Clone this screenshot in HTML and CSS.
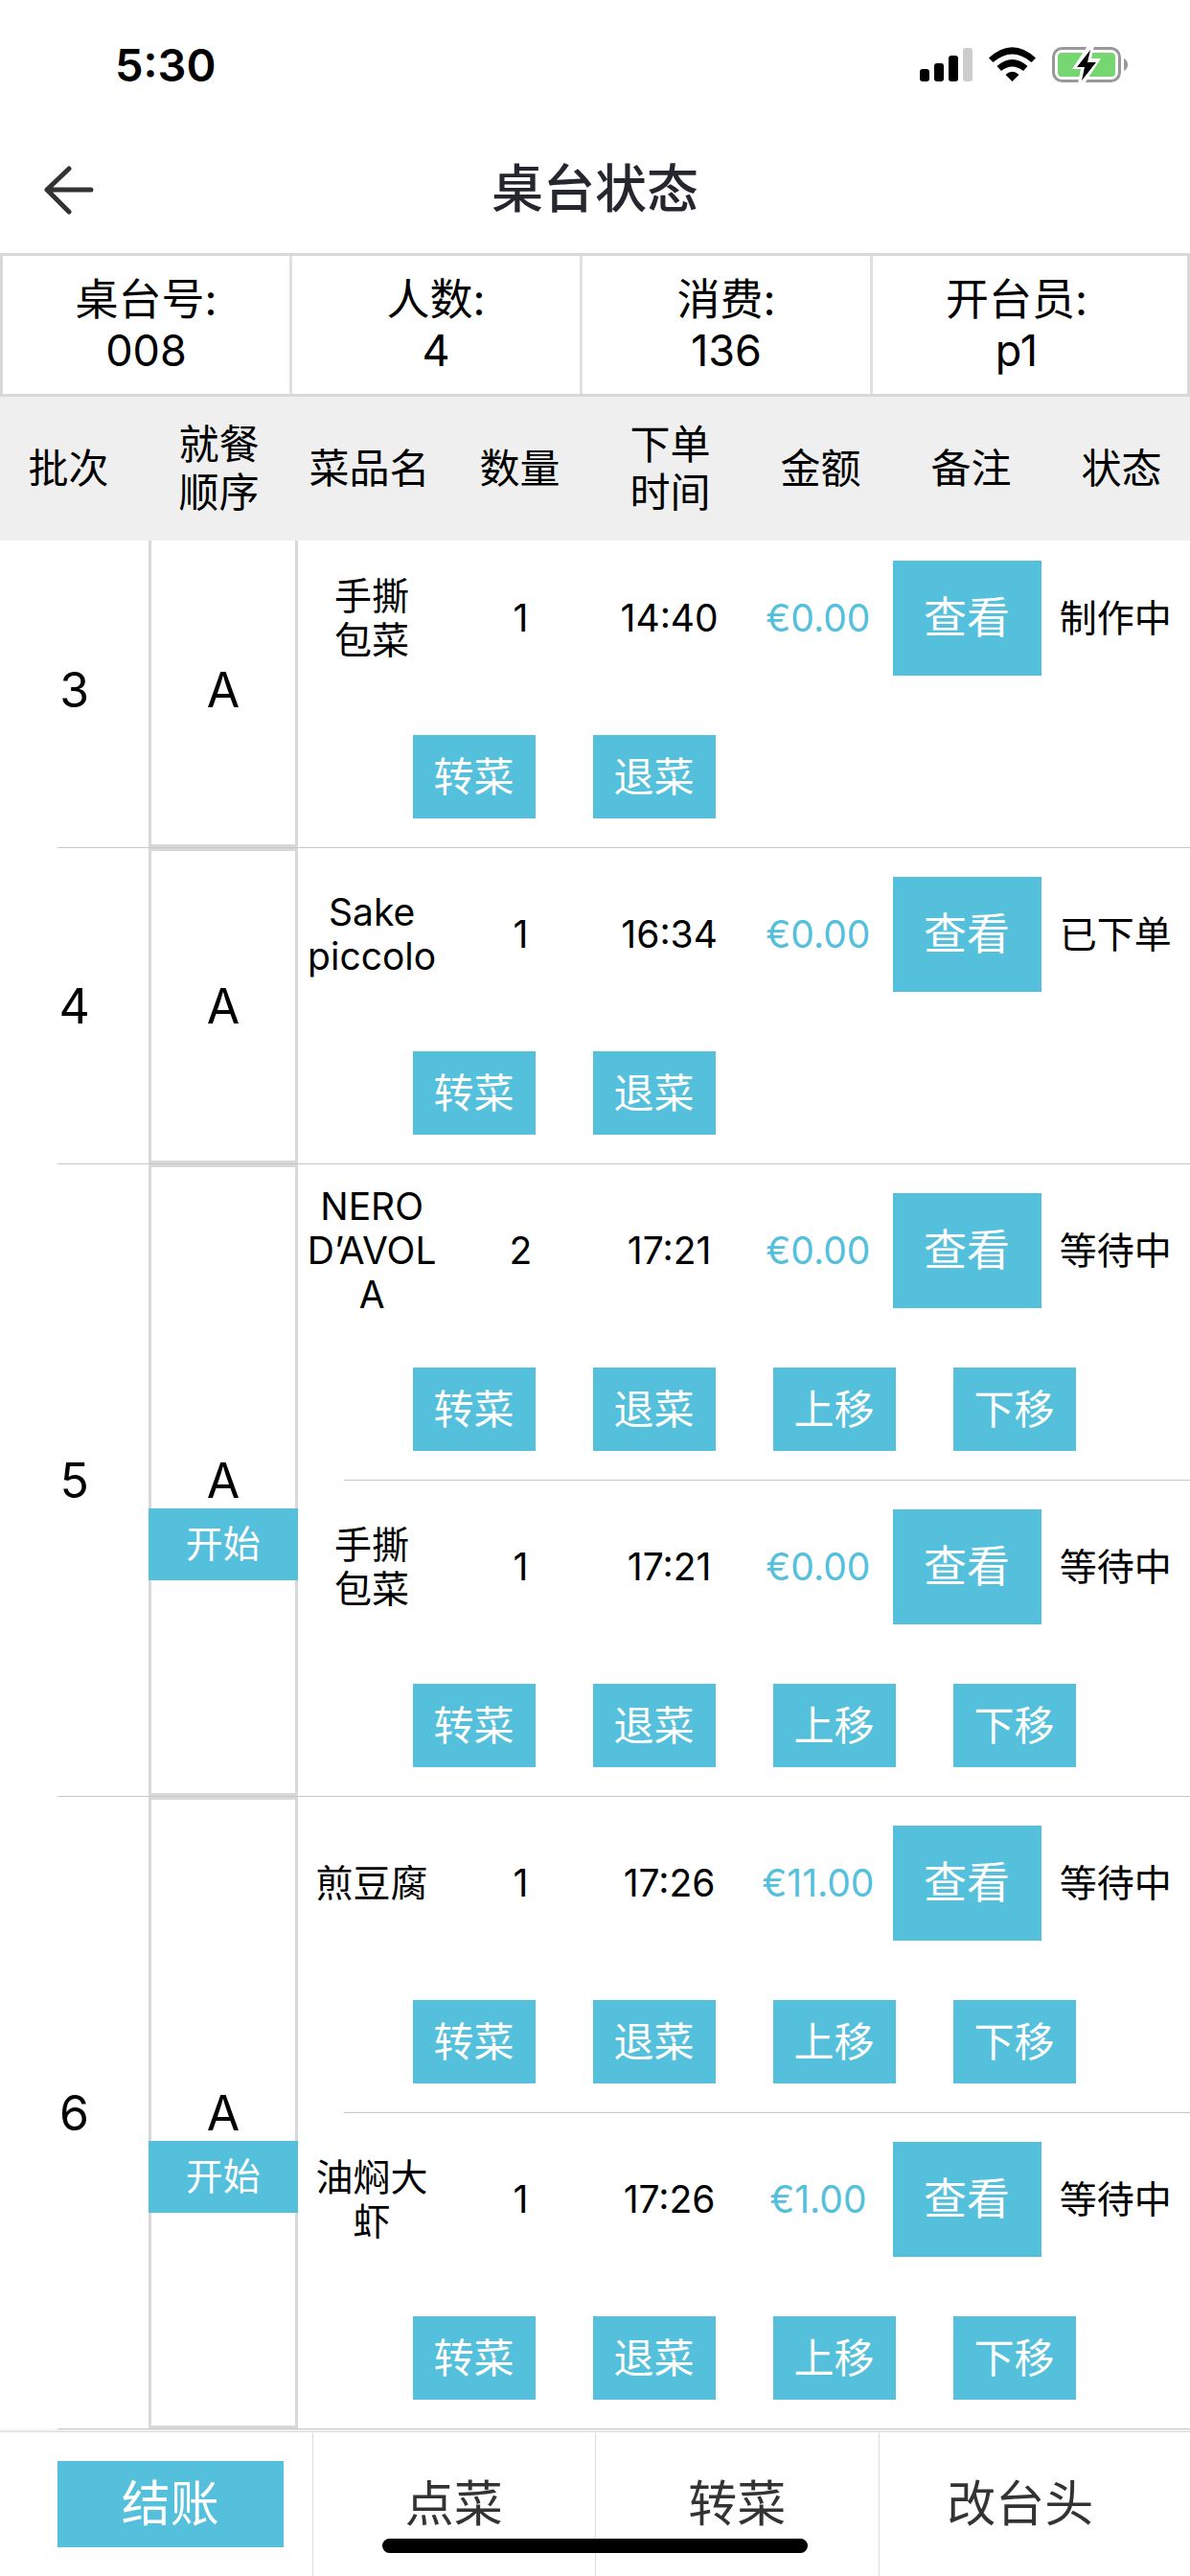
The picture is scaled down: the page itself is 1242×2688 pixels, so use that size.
FILE: index.html
```
<!DOCTYPE html>
<html lang="zh-CN">
<head>
<meta charset="utf-8">
<meta name="viewport" content="width=device-width">
<title>桌台状态</title>
<link rel="stylesheet" href="styles.css">
</head>
<body>
<div class="status-bar">
  <span class="clock">5:30</span>
  <svg class="status-icons" width="220" height="40" viewBox="958 48 220 40" aria-hidden="true">
    <rect x="960" y="72" width="10" height="13" rx="3"/>
    <rect x="975" y="66" width="10" height="19" rx="3"/>
    <rect x="990" y="58" width="10" height="27" rx="3"/>
    <rect x="1005" y="50" width="10" height="35" rx="3" fill="#ccc"/>
    <path d="M1032 60.500 Q1056.500 38 1081 60.500 L1076.500 65 Q1056.500 48 1036.500 65 Z"/>
    <path d="M1040.500 69 Q1056.500 55 1072.500 69 L1068 74 Q1056.500 65 1045 74 Z"/>
    <path d="M1049.500 78 Q1056.500 71.500 1063.500 78 L1056.500 85 Z"/>
    <rect x="1099.500" y="50.500" width="69" height="34" rx="9" fill="none" stroke="#999" stroke-width="3"/>
    <path d="M1173 61 Q1177 63 1177 67.500 Q1177 72 1173 74 Z" fill="#999"/>
    <rect x="1104" y="55" width="60" height="25" rx="4" fill="#76d672"/>
    <path d="M1135 48 L1119 72 H1128 L1125 87 H1132 L1149 61 H1139 L1142 48 Z" fill="#fff"/>
    <path d="M1138 52 L1124 70 H1132 L1129 84 L1144 65 H1135 Z"/>
  </svg>
</div>
<header class="nav-bar">
  <button class="back" type="button" aria-label="返回">
    <svg width="54" height="52" viewBox="0 0 54 52" fill="none" stroke="#333" stroke-width="5" stroke-linecap="round" stroke-linejoin="round" aria-hidden="true">
      <path d="M27 4 L4 26 L27 49 M4 26 H50"/>
    </svg>
  </button>
  <h1 class="title">桌台状态</h1>
</header>
<dl class="summary">
  <div class="summary-item"><dt>桌台号:</dt><dd>008</dd></div>
  <div class="summary-item"><dt>人数:</dt><dd>4</dd></div>
  <div class="summary-item"><dt>消费:</dt><dd>136</dd></div>
  <div class="summary-item"><dt>开台员:</dt><dd>p1</dd></div>
</dl>
<table class="orders">
  <thead class="orders-head">
    <tr>
      <th>批次</th><th>就餐<br>顺序</th><th>菜品名</th><th>数量</th><th>下单<br>时间</th><th>金额</th><th>备注</th><th>状态</th>
    </tr>
  </thead>
  <tbody class="batch">
    <tr>
      <td class="batch-no" rowspan="2">3</td>
      <td class="course" rowspan="2"><span class="course-name">A</span></td>
      <td class="cell">手撕<br>包菜</td><td class="cell">1</td><td class="cell">14:40</td><td class="cell price">€0.00</td>
      <td class="cell"><button class="btn view" type="button">查看</button></td><td class="cell">制作中</td>
    </tr>
    <tr><td class="actions" colspan="6"><div class="action-list"><button class="btn action" type="button">转菜</button><button class="btn action" type="button">退菜</button></div></td></tr>
  </tbody>
  <tbody class="batch">
    <tr>
      <td class="batch-no" rowspan="2">4</td>
      <td class="course" rowspan="2"><span class="course-name">A</span></td>
      <td class="cell">Sake<br>piccolo</td><td class="cell">1</td><td class="cell">16:34</td><td class="cell price">€0.00</td>
      <td class="cell"><button class="btn view" type="button">查看</button></td><td class="cell">已下单</td>
    </tr>
    <tr><td class="actions" colspan="6"><div class="action-list"><button class="btn action" type="button">转菜</button><button class="btn action" type="button">退菜</button></div></td></tr>
  </tbody>
  <tbody class="batch">
    <tr>
      <td class="batch-no double" rowspan="4">5</td>
      <td class="course double" rowspan="4"><span class="course-name">A</span><button class="btn start" type="button">开始</button></td>
      <td class="cell">NERO<br>D’AVOL<br>A</td><td class="cell">2</td><td class="cell">17:21</td><td class="cell price">€0.00</td>
      <td class="cell"><button class="btn view" type="button">查看</button></td><td class="cell">等待中</td>
    </tr>
    <tr><td class="actions divided" colspan="6"><div class="action-list"><button class="btn action" type="button">转菜</button><button class="btn action" type="button">退菜</button><button class="btn action" type="button">上移</button><button class="btn action" type="button">下移</button></div></td></tr>
    <tr>
      <td class="cell">手撕<br>包菜</td><td class="cell">1</td><td class="cell">17:21</td><td class="cell price">€0.00</td>
      <td class="cell"><button class="btn view" type="button">查看</button></td><td class="cell">等待中</td>
    </tr>
    <tr><td class="actions" colspan="6"><div class="action-list"><button class="btn action" type="button">转菜</button><button class="btn action" type="button">退菜</button><button class="btn action" type="button">上移</button><button class="btn action" type="button">下移</button></div></td></tr>
  </tbody>
  <tbody class="batch">
    <tr>
      <td class="batch-no double" rowspan="4">6</td>
      <td class="course double" rowspan="4"><span class="course-name">A</span><button class="btn start" type="button">开始</button></td>
      <td class="cell">煎豆腐</td><td class="cell">1</td><td class="cell">17:26</td><td class="cell price">€11.00</td>
      <td class="cell"><button class="btn view" type="button">查看</button></td><td class="cell">等待中</td>
    </tr>
    <tr><td class="actions divided" colspan="6"><div class="action-list"><button class="btn action" type="button">转菜</button><button class="btn action" type="button">退菜</button><button class="btn action" type="button">上移</button><button class="btn action" type="button">下移</button></div></td></tr>
    <tr>
      <td class="cell">油焖大<br>虾</td><td class="cell">1</td><td class="cell">17:26</td><td class="cell price">€1.00</td>
      <td class="cell"><button class="btn view" type="button">查看</button></td><td class="cell">等待中</td>
    </tr>
    <tr><td class="actions" colspan="6"><div class="action-list"><button class="btn action" type="button">转菜</button><button class="btn action" type="button">退菜</button><button class="btn action" type="button">上移</button><button class="btn action" type="button">下移</button></div></td></tr>
  </tbody>
</table>
<footer class="toolbar">
  <div class="tool"><button class="btn checkout" type="button">结账</button></div>
  <div class="tool"><button class="tool-btn" type="button">点菜</button></div>
  <div class="tool"><button class="tool-btn" type="button">转菜</button></div>
  <div class="tool"><button class="tool-btn" type="button">改台头</button></div>
  <div class="home-indicator"></div>
</footer>
</body>
</html>
```

FILE: styles.css
```
:root {
  --accent: #54c0db;
  --line: #d8d8d8;
  --hairline: #c8c7cc;
}

* {
  box-sizing: border-box;
}

body {
  margin: 0;
  overflow-x: hidden;
  background: #fff;
  color: #000;
  font-family: Inter, "Noto Sans CJK SC", sans-serif;
  font-size: 39px;
  line-height: 46px;
}

button {
  display: block;
  margin: 0;
  padding: 0;
  border: 0;
  background: none;
  color: inherit;
  font: inherit;
}

.btn {
  background: var(--accent);
  color: #fff;
}

.status-bar {
  display: flex;
  align-items: center;
  justify-content: space-between;
  height: 132px;
  padding: 4px 64px 0 120px;
}

.clock {
  font-size: 47px;
  font-weight: 600;
}

.status-icons {
  display: block;
}

.nav-bar {
  display: grid;
  grid-template-columns: 98px 1fr 98px;
  align-items: center;
  height: 132px;
}

.back {
  padding-left: 45px;
}

.back svg {
  display: block;
}

.title {
  margin: 0;
  color: #26262e;
  font-size: 54px;
  font-weight: 500;
  line-height: 60px;
  text-align: center;
}

.summary {
  display: grid;
  grid-template-columns: 299fr 303fr 303fr 331fr;
  margin: 0;
  border: 3px solid var(--line);
  font-size: 45px;
  line-height: 53px;
  text-align: center;
}

.summary-item {
  padding: 19px 0;
}

.summary-item + .summary-item {
  border-left: 3px solid #e0e0e0;
}

.summary-item:last-child {
  padding-right: 28px;
}

.summary dd {
  margin: 0;
}

.orders,
.orders-head {
  display: block;
}

.orders-head {
  position: relative;
  z-index: 1;
  background: #efefef;
}

.orders-head tr {
  display: grid;
  grid-template-columns: repeat(8, 1fr);
  align-items: center;
  height: 150px;
  margin: 0 -7px;
}

.orders-head th {
  padding: 0;
  font-size: 42px;
  font-weight: 400;
  line-height: 50px;
}

/* The list is scrolled slightly under the fixed heading row. */
.orders-head + .batch {
  margin-top: -9px;
}

.batch {
  display: grid;
  grid-template-columns: repeat(8, 1fr);
  padding-bottom: 1px;
  background: linear-gradient(var(--hairline), var(--hairline)) 60px 100% / 100% 1px no-repeat;
  text-align: center;
}

.batch tr {
  display: contents;
}

.batch td {
  padding: 0;
}

.batch .batch-no,
.batch .course {
  grid-row: 1 / span 2;
  font-size: 50px;
  line-height: 58px;
}

.batch .double {
  grid-row: 1 / span 4;
}

.batch-no {
  align-self: center;
}

.course {
  display: grid;
  grid-template-rows: 1fr auto 1fr;
  border: 3px solid var(--line);
}

.course-name {
  grid-row: 2;
}

.start {
  grid-row: 3;
  height: 75px;
  margin: 0 -3px;
  font-size: 39px;
  line-height: 46px;
}

.cell {
  display: grid;
  align-items: center;
  height: 180px;
}

.price {
  color: var(--accent);
}

.view {
  height: 120px;
  font-size: 45px;
}

.actions {
  grid-column: span 6;
}

.batch .divided {
  padding-bottom: 1px;
  background: linear-gradient(var(--hairline), var(--hairline)) 48px 100% / 100% 1px no-repeat;
}

.action-list {
  display: flex;
  gap: 60px;
  padding: 32px 0 30px 120px;
}

.action {
  width: 128px;
  height: 87px;
  font-size: 42px;
}

.toolbar {
  position: relative;
  display: grid;
  grid-template-columns: repeat(4, 1fr);
  height: 153px;
  padding: 1px 30px 0;
  border-top: 2px solid #efefef;
  box-shadow: inset 0 1px #ddd;
  color: #333;
  font-size: 51px;
}

.tool {
  padding: 30px;
}

.tool + .tool {
  border-left: 1px solid #ddd;
}

.tool-btn,
.checkout {
  width: 100%;
  height: 90px;
}

.home-indicator {
  position: absolute;
  bottom: 24px;
  left: 50%;
  width: 444px;
  height: 15px;
  margin-left: -222px;
  border-radius: 8px;
  background: #000;
}
```
